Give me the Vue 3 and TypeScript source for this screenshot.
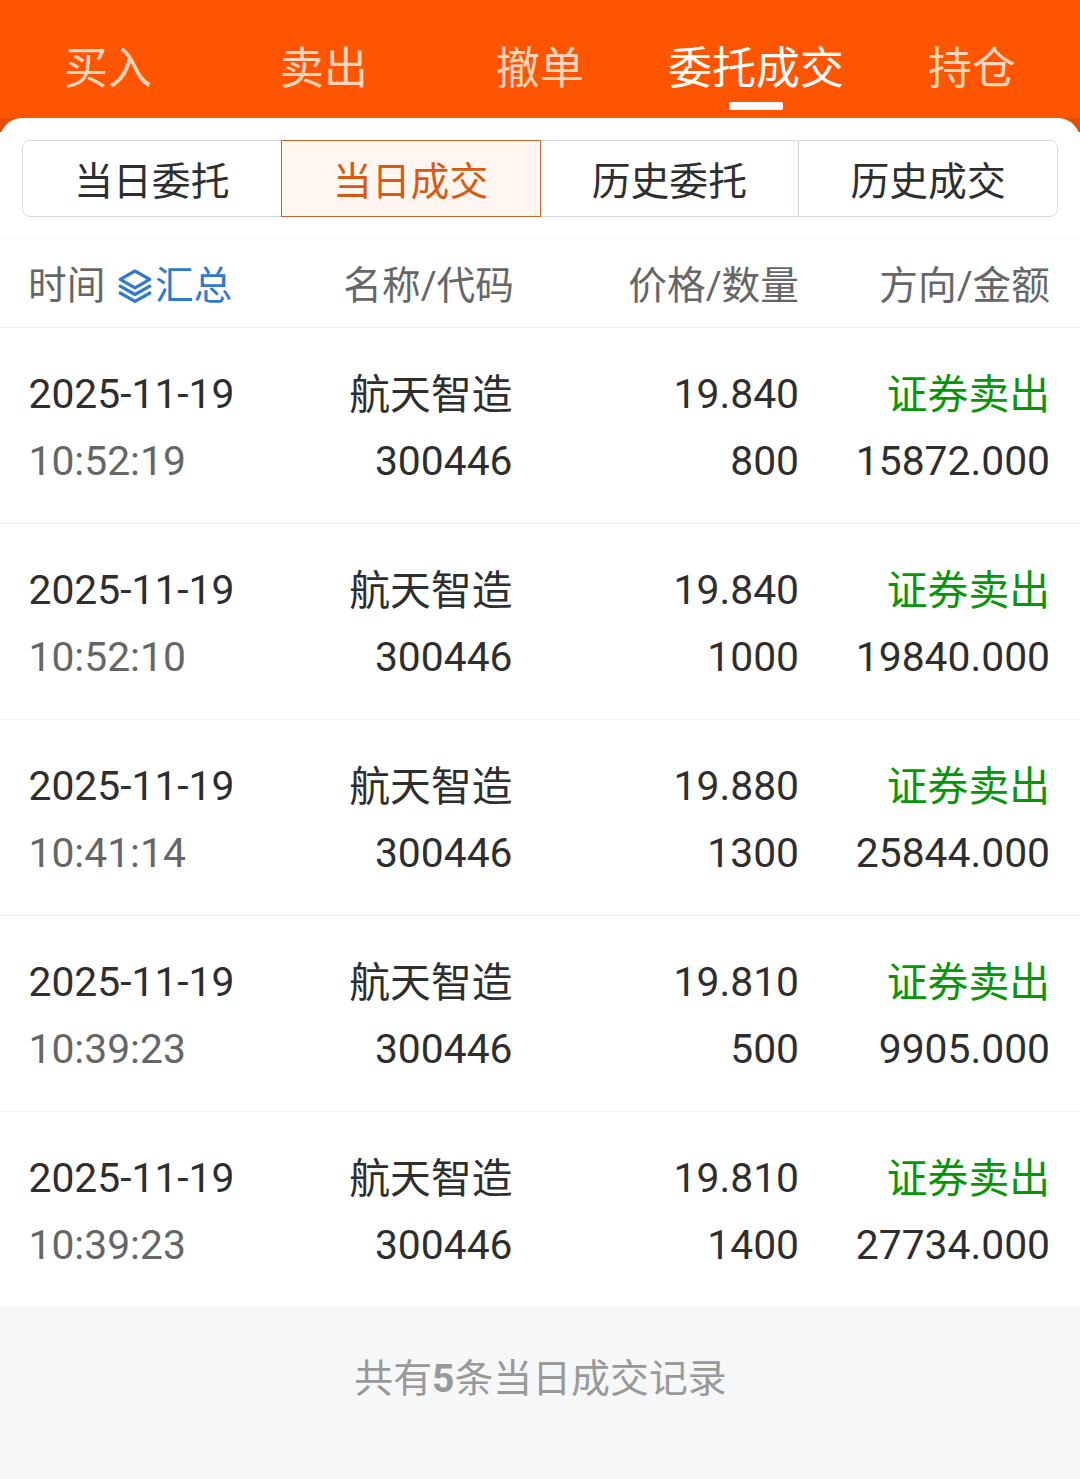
<script setup lang="ts">
interface Trade {
  date: string
  time: string
  name: string
  code: string
  price: string
  qty: string
  side: string
  amount: string
}

const tabs: string[] = ['买入', '卖出', '撤单', '委托成交', '持仓']
const activeTab = 3
const segments: string[] = ['当日委托', '当日成交', '历史委托', '历史成交']
const activeSegment = 1

const mk = (time: string, price: string, qty: string, amount: string): Trade => ({
  date: '2025-11-19', time, name: '航天智造', code: '300446', price, qty, side: '证券卖出', amount,
})
const trades: Trade[] = [
  mk('10:52:19', '19.840', '800', '15872.000'),
  mk('10:52:10', '19.840', '1000', '19840.000'),
  mk('10:41:14', '19.880', '1300', '25844.000'),
  mk('10:39:23', '19.810', '500', '9905.000'),
  mk('10:39:23', '19.810', '1400', '27734.000'),
]
</script>

<template>
  <div class="page">
    <nav class="tabs">
      <div v-for="(t, i) in tabs" :key="t" class="tab" :class="{ active: i === activeTab }">
        <span>{{ t }}</span>
      </div>
    </nav>
    <main class="sheet">
      <div class="segments">
        <div v-for="(s, i) in segments" :key="s" class="segment" :class="{ active: i === activeSegment }">{{ s }}</div>
      </div>
      <div class="head">
        <div class="c1">
          <span>时间</span>
          <span class="summary">
            <svg class="layers" viewBox="0 0 36 36" fill="none" stroke="currentColor" stroke-width="3.2" stroke-linejoin="round" stroke-linecap="round">
              <path d="M18 3 L32.800 11.300 L18 19.800 L3.200 11.300 Z" />
              <path d="M3.200 18.200 L18 26.500 L32.800 18.200" />
              <path d="M3.200 25 L18 33.300 L32.800 25" />
            </svg><span>汇总</span>
          </span>
        </div>
        <div class="c2">名称/代码</div>
        <div class="c3">价格/数量</div>
        <div class="c4">方向/金额</div>
      </div>
      <div v-for="(r, i) in trades" :key="i" class="row">
        <div class="c1"><div>{{ r.date }}</div><div class="time">{{ r.time }}</div></div>
        <div class="c2"><div class="han">{{ r.name }}</div><div>{{ r.code }}</div></div>
        <div class="c3"><div>{{ r.price }}</div><div>{{ r.qty }}</div></div>
        <div class="c4"><div class="han sell">{{ r.side }}</div><div>{{ r.amount }}</div></div>
      </div>
    </main>
    <footer class="foot">共有<b>5</b>条当日成交记录</footer>
  </div>
</template>

<style>
body { margin: 0; background: #f5f7f9; }
</style>

<style scoped>
.page {
  width: 1080px;
  height: 1479px;
  overflow: hidden;
  background: #f5f7f9;
  color: #2e2e2e;
  font-family: Roboto, "Noto Sans CJK SC", sans-serif;
}
.tabs {
  display: flex;
  height: 132px;
  background: linear-gradient(#ff5500 118px, #e44d02 118px);
}
.tab {
  flex: 1 1 0;
  min-width: 0;
  display: flex;
  flex-direction: column;
  align-items: center;
  padding-top: 38px;
  font-size: 43.9px;
  line-height: 62px;
  color: #ffd6bd;
  white-space: nowrap;
}
.tab.active { color: #fff; }
.tab.active::after {
  content: "";
  width: 54px;
  height: 8px;
  margin-top: 2px;
  border-radius: 2px;
  background: #fff;
}
.sheet {
  position: relative;
  margin-top: -14px;
  padding-top: 22px;
  border-radius: 22px 22px 0 0;
  background: #fff;
}
.segments {
  display: flex;
  box-sizing: border-box;
  height: 77px;
  margin: 0 22px;
  border: 1px solid #d5dbdb;
  border-radius: 8px;
}
.segment {
  flex: 1 1 0;
  box-sizing: border-box;
  font-size: 38.8px;
  line-height: 81px;
  text-align: center;
}
.segment:last-child { border-left: 1px solid #cfd4d5; }
.segment.active {
  margin: -1px 0;
  border: 1px solid #cf6428;
  background: #fff6f2;
  color: #d9590f;
}
.head {
  display: flex;
  box-sizing: border-box;
  height: 90px;
  margin-top: 21px;
  padding: 0 30px 0 28px;
  border-top: 1px solid #f3f6f6;
  border-bottom: 1px solid #eee;
  font-size: 38.7px;
  line-height: 93px;
  color: #666;
}
.head .c1 { display: flex; }
.summary {
  display: flex;
  align-items: center;
  height: 93px;
  margin-left: 11.500px;
  color: #3079cf;
}
.layers { width: 36px; height: 36px; margin-right: 2px; }
.c1 { width: 250px; }
.c2 { width: 236px; text-align: right; }
.c3 { width: 285px; text-align: right; }
.c4 { width: 251px; text-align: right; }
.row {
  display: flex;
  box-sizing: border-box;
  height: 196px;
  padding: 33px 30px 0 28.500px;
  border-bottom: 1px solid #f0f0f0;
  font-size: 40.8px;
  line-height: 67px;
  white-space: nowrap;
}
.row .c2 { width: 234px; }
.row .c3 { width: 286.500px; }
.row:last-child { height: 195px; border-bottom: 0; }
.han { height: 67px; line-height: 68px; }
.time { color: #666; }
.sell { color: #079607; }
.foot {
  padding-top: 43px;
  padding-left: 1px;
  font-size: 38.9px;
  line-height: 58px;
  text-align: center;
  color: #999;
}
.foot b { font-weight: 700; }
</style>
